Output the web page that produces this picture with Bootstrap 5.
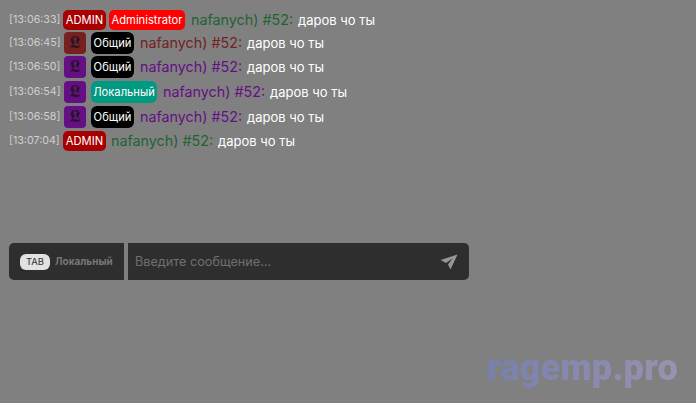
<!DOCTYPE html>
<html lang="ru"><head><meta charset="utf-8">
<link href="https://cdn.jsdelivr.net/npm/bootstrap@5.3.0/dist/css/bootstrap.min.css" rel="stylesheet">
<style>
html,body{height:100%}
body{background:#808080;font-family:Inter,"Noto Sans",sans-serif;color:#fff;overflow:hidden;position:relative}
.chat-log{padding:8px 0 0 9px;height:243px}
.chat-row{display:flex;align-items:center;line-height:20px}
.stamp{font-size:10.7px;color:#cfcfcf;width:54px;flex:none}
.tag{font-size:11.2px;line-height:20px;height:20px;padding:0;border-radius:5px;color:#fff;margin-right:3px;white-space:nowrap;flex:none}
.tag-admin{background:#a80000;width:43px;text-align:center}
.tag-adm2{background:#ff0000;width:76px;text-align:center;margin-right:6px}
.tag-last{margin-right:5px}
.tag-common{background:#000;margin-right:6px;height:22px;line-height:22px;border-radius:6px;width:43px;text-align:center}
.tag-local{background:#009982;height:22px;line-height:22px;border-radius:6px;width:66px;text-align:center;margin-right:6px}
.rank{width:22px;height:22px;border-radius:4px;margin:0 5px 0 1px;display:flex;align-items:center;justify-content:center;font-family:"DejaVu Serif",serif;font-size:17px;color:#2a1526;line-height:1;flex:none}
.rank-glyph{display:inline-block;transform:scaleX(1.25)}
.rank-red{background:#762020}
.rank-purple{background:#650f85}
.nick{font-size:14.3px;margin-right:5px;white-space:nowrap}
.nick-green{color:#1f6332}
.nick-red{color:#762020}
.nick-purple{color:#650f85}
.msg{font-size:13px;white-space:nowrap}
.h-row-a{height:23px}.h-row-b{height:25px}
.input-bar{margin-left:9px;width:460px;height:37px;gap:4px}
.channel{width:115px;background:#2e2e2e;border-radius:5px 0 0 5px;padding-left:11px;gap:5px}
.tab-key{background:#e2e2e2;color:#2e2e2e;font-size:9.5px;width:30px;height:16px;border-radius:6px;line-height:16px;text-align:center}
.channel-name{font-size:10px;font-weight:700;color:#777}
.field{background:#2e2e2e;border-radius:0 5px 5px 0;padding:0 11px 0 7px}
.field-text{font-size:12.7px;color:#6f6f6f}
.watermark{position:absolute;right:18px;top:348px;font-size:36px;font-weight:900;line-height:40px;background:linear-gradient(90deg,#7680ae,#9a92b0);-webkit-background-clip:text;background-clip:text;color:transparent;font-family:Roboto,sans-serif;letter-spacing:.3px}
</style></head><body>
<div class="chat-log">
<div class="chat-row h-row-a"><span class="stamp">[13:06:33]</span><span class="tag tag-admin">ADMIN</span><span class="tag tag-adm2">Administrator</span><span class="nick nick-green">nafanych) #52:</span><span class="msg">даров чо ты</span></div>
<div class="chat-row h-row-a"><span class="stamp">[13:06:45]</span><span class="rank rank-red"><span class="rank-glyph">𝕷</span></span><span class="tag tag-common">Общий</span><span class="nick nick-red">nafanych) #52:</span><span class="msg">даров чо ты</span></div>
<div class="chat-row h-row-b"><span class="stamp">[13:06:50]</span><span class="rank rank-purple"><span class="rank-glyph">𝕷</span></span><span class="tag tag-common">Общий</span><span class="nick nick-purple">nafanych) #52:</span><span class="msg">даров чо ты</span></div>
<div class="chat-row h-row-b"><span class="stamp">[13:06:54]</span><span class="rank rank-purple"><span class="rank-glyph">𝕷</span></span><span class="tag tag-local">Локальный</span><span class="nick nick-purple">nafanych) #52:</span><span class="msg">даров чо ты</span></div>
<div class="chat-row h-row-b"><span class="stamp">[13:06:58]</span><span class="rank rank-purple"><span class="rank-glyph">𝕷</span></span><span class="tag tag-common">Общий</span><span class="nick nick-purple">nafanych) #52:</span><span class="msg">даров чо ты</span></div>
<div class="chat-row h-row-a"><span class="stamp">[13:07:04]</span><span class="tag tag-admin tag-last">ADMIN</span><span class="nick nick-green">nafanych) #52:</span><span class="msg">даров чо ты</span></div>
</div>
<div class="input-bar d-flex">
<div class="channel d-flex align-items-center"><span class="tab-key">TAB</span><span class="channel-name">Локальный</span></div>
<div class="field flex-grow-1 d-flex align-items-center justify-content-between"><span class="field-text">Введите сообщение...</span>
<svg width="18" height="16" viewBox="0 0 18 16"><path fill="#969696" d="M0.5 6 L17.5 0.5 L10.5 15.5 L8 10.5 L12.5 4.5 L6 9 Z"/></svg></div>
</div>
<div class="watermark">ragemp.pro</div>
</body></html>
